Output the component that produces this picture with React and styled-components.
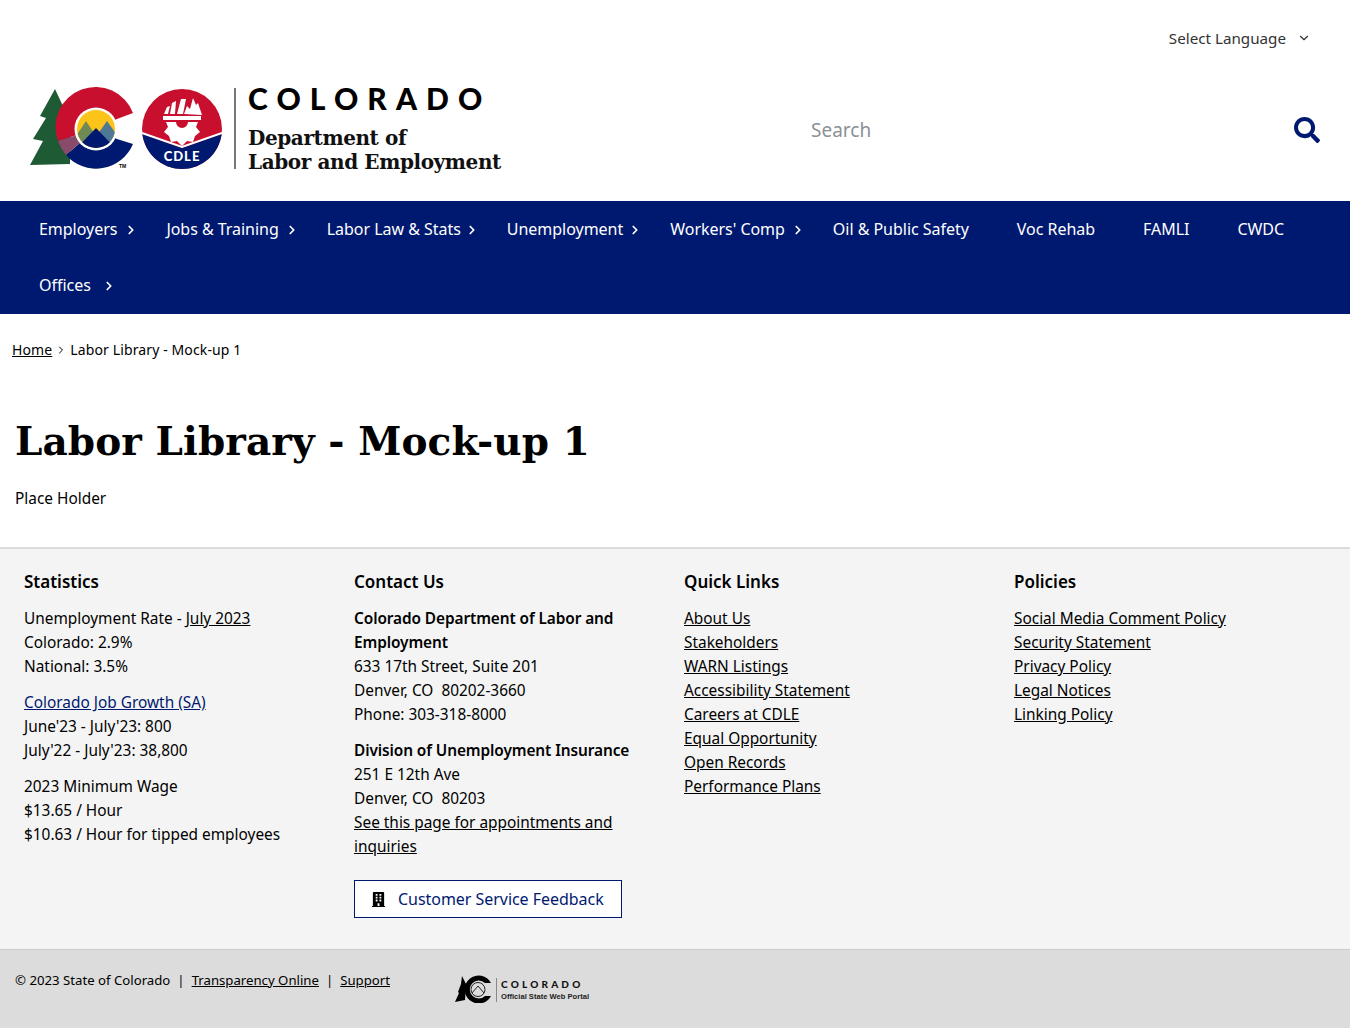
import React from 'react';
import styled, { createGlobalStyle } from 'styled-components';
import { ChevronDown, ChevronRight } from 'lucide-react';
import { FaBuilding, FaSearch } from 'react-icons/fa';

const sans = '"Noto Sans", sans-serif';
const serif = '"DejaVu Serif", serif';
const navy = '#001970';

const Global = createGlobalStyle`
  html, body { margin: 0; padding: 0; background: #fff; }
  body { font-family: ${sans}; font-size: 15.4px; color: #000; }
  * { box-sizing: border-box; }
`;
const Page = styled.div`width: 1350px; height: 1028px; overflow: hidden; display: flex; flex-direction: column;`;
const Masthead = styled.header`height: 201px; display: flex; flex-direction: column;`;
const LangRow = styled.div`height: 77px; padding: 26px 39px 0 0; display: flex; justify-content: flex-end; align-items: flex-start;`;
const LangSelect = styled.div`display: flex; align-items: center; gap: 11px; height: 24px; font-size: 15.2px; color: #333;`;
const BrandRow = styled.div`display: flex; justify-content: space-between; padding: 7px 30px 0 30px;`;
const Brand = styled.div`display: flex; align-items: center; gap: 12px; height: 88px;`;
const Divider = styled.div`width: 2px; height: 81px; background: #777;`;
const BrandText = styled.div`display: flex; flex-direction: column; padding-top: 3px;`;
const StateName = styled.div`font: 900 30px/26px Lato, sans-serif; letter-spacing: 9.1px; color: #000;`;
const DeptName = styled.div`font: 700 20px/24px ${serif}; color: #111; margin-top: 15px; letter-spacing: -0.4px;`;
const SearchBox = styled.div`width: 509px; height: 44px; margin-top: 24px; display: flex; align-items: center; justify-content: space-between; color: ${navy};`;
const SearchHint = styled.span`font-size: 19px; color: #8b9095;`;
const Nav = styled.nav`background: ${navy}; height: 113px; padding: 0 15px; display: flex; flex-wrap: wrap; align-content: flex-start;`;
const NavItem = styled.a`display: flex; align-items: center; height: 56px; padding: 0 24px; color: #fff; font-size: 16px; letter-spacing: -0.03px;`;
const NavChevron = styled(ChevronRight)`margin: 1px -20px 0 ${p => p.$gap}px;`;
const Crumbs = styled.div`height: 73px; padding: 25px 12px 0; display: flex; align-items: flex-start; gap: 3px; font-size: 14px; line-height: 22px; letter-spacing: 0.12px;`;
const CrumbChevron = styled(ChevronRight)`margin-top: 5px;`;
const Link = styled.a`color: ${p => p.$color || '#000'}; text-decoration: underline; cursor: pointer;`;
const Main = styled.main`height: 160px; padding: 0 15px; display: flex; flex-direction: column;`;
const Title = styled.h1`margin: 26px 0 0; font: 700 39px/56px ${serif}; letter-spacing: 0.08px; color: #000;`;
const Para = styled.p`margin: 18px 0 0; font-size: 15.4px; line-height: 24px;`;
const Footer = styled.footer`height: 402px; background: #f4f4f4; border-top: 2px solid #dcdcdc; display: grid; grid-template-columns: repeat(4, 330px); padding: 21px 0 0 24px;`;
const Column = styled.section`display: flex; flex-direction: column; gap: 12px; padding-right: 40px;`;
const ColTitle = styled.h2`margin: 0 0 1px; font-size: 17px; line-height: 24px; font-weight: 600;`;
const Block = styled.div`font-size: 15.4px; line-height: 24px; display: flex; flex-direction: column; align-items: flex-start;`;
const Strong = styled.strong`font-weight: 600; letter-spacing: -0.09px;`;
const Feedback = styled.a`margin-top: 9px; width: 268px; height: 38px; display: flex; align-items: center; gap: 12px; padding-left: 16px; background: #fff; border: 1px solid ${navy}; color: ${navy}; font-size: 16px; letter-spacing: -0.04px;`;
const BuildingIcon = styled(FaBuilding)`color: #000; font-size: 15px;`;
const Legal = styled.div`flex: 1; background: #dcdcdc; border-top: 1px solid #ccc; display: flex; align-items: flex-start; padding: 19px 0 0 15px; font-size: 13.2px; line-height: 22px;`;
const LegalText = styled.div`display: flex; gap: 7px; width: 440px;`;
const Portal = styled.div`display: flex; align-items: center; gap: 3px; margin-top: 6px;`;
const PortalText = styled.div`display: flex; flex-direction: column; border-left: 1px solid #888; padding-left: 4px; margin-top: 2px;`;
const PortalState = styled.div`font: 900 10px/13px Lato, sans-serif; letter-spacing: 3.2px; color: #111;`;
const PortalSub = styled.div`font: 700 7.6px/11px "Liberation Sans", sans-serif; color: #222;`;

const LogoMark = () => (
  <svg width="192" height="85" viewBox="30 85 192 85">
    <defs>
      <clipPath id="sun"><circle cx="96" cy="128" r="19" /></clipPath>
    </defs>
    <path d="M55 88 L62 103 L70 112 L70 163 L30 164 L43 140 L33 138 L46 117 L40 115 Z" fill="#1e5a34" />
    <path d="M133 112 A40 40 0 0 0 58 140 L96 128 L117 118 Z" fill="#c8102e" />
    <path d="M66 154 A40 40 0 0 0 133 143 L117 138 L96 128 Z" fill="#001970" />
    <path d="M58 140 A40 40 0 0 0 66 154 L96 128 Z" fill="#8a4a6a" />
    <circle cx="96" cy="128" r="21.5" fill="#fff" />
    <circle cx="96" cy="128" r="19" fill="#fcc419" />
    <g clipPath="url(#sun)">
      <path d="M70 144 L86 120 L102 144 Z" fill="#6f8a55" />
      <path d="M90 144 L107 120 L124 144 Z" fill="#4f7896" />
      <path d="M70 154 L96 127 L122 154 Z" fill="#001970" />
    </g>
    <text x="119" y="167" fontSize="5" fontWeight="700" fontFamily="Liberation Sans">TM</text>
    <circle cx="182" cy="128" r="40" fill="#c8102e" />
    <path d="M142.3 133 L182 147 L221.7 133 A40 40 0 0 1 142.3 133 Z" fill="#001970" />
    <path d="M142 132 L182 146 L222 132" fill="none" stroke="#fff" strokeWidth="2" />
    <path d="M164 113 L167 106 L170 105 L168 113 Z M170 113 L172 102 L176 100 L175 113 Z M177 113 L181 98 L186 98 L183 113 Z M184 113 L187 105 L190 108 L193 97 L196 104 L198 102 L202 114 Z" fill="#fff" />
    <path d="M163 115 L201 115 L201 119 L163 119 Z" fill="#fff" />
    <path d="M166 121 L176 121 A6 6 0 0 0 188 121 L198 121 L196 126 L200 131 L195 135 L193 141 L187 140 L182 145 L177 140 L171 141 L169 135 L164 131 L168 126 Z" fill="#fff" />
    <text x="182" y="160" textAnchor="middle" fontSize="13" fontWeight="900" letterSpacing="1" fill="#fff" fontFamily="Lato">CDLE</text>
  </svg>
);

const PortalMark = () => (
  <svg width="38" height="28" viewBox="0 0 38 28">
    <path d="M7 1 L11 9 L10 25 L0 27 L4 18 L3 17 L6 9 Z" fill="#000" />
    <path d="M36 8 A14 14 0 1 0 36 21 L30 21 A9 9 0 1 1 30 8 Z" fill="#000" />
    <circle cx="23" cy="14.5" r="7" fill="none" stroke="#222" strokeWidth="1" />
    <path d="M17 18 L23 11 L29 18" fill="none" stroke="#222" strokeWidth="1" />
  </svg>
);

const nav = [
  ['Employers', 7], ['Jobs & Training', 6], ['Labor Law & Stats', 4], ['Unemployment', 5],
  ['Workers\' Comp', 6], ['Oil & Public Safety', 0], ['Voc Rehab', 0], ['FAMLI', 0], ['CWDC', 0], ['Offices', 11],
];

export default function App() {
  return (
    <Page>
      <Global />
      <Masthead>
        <LangRow><LangSelect>Select Language <ChevronDown size={14} /></LangSelect></LangRow>
        <BrandRow>
          <Brand>
            <LogoMark />
            <Divider />
            <BrandText>
              <StateName>COLORADO</StateName>
              <DeptName>Department of<br />Labor and Employment</DeptName>
            </BrandText>
          </Brand>
          <SearchBox><SearchHint>Search</SearchHint><FaSearch size={26} /></SearchBox>
        </BrandRow>
      </Masthead>
      <Nav>
        {nav.map(([t, g]) => <NavItem key={t}>{t}{g > 0 && <NavChevron $gap={g} size={14} strokeWidth={3} />}</NavItem>)}
      </Nav>
      <Crumbs><Link>Home</Link> <CrumbChevron size={12} /> <span>Labor Library - Mock-up 1</span></Crumbs>
      <Main>
        <Title>Labor Library - Mock-up 1</Title>
        <Para>Place Holder</Para>
      </Main>
      <Footer>
        <Column>
          <ColTitle>Statistics</ColTitle>
          <Block><span>Unemployment Rate - <Link>July 2023</Link></span><span>Colorado: 2.9%</span><span>National: 3.5%</span></Block>
          <Block><Link $color={navy}>Colorado Job Growth (SA)</Link><span>June'23 - July'23: 800</span><span>July'22 - July'23: 38,800</span></Block>
          <Block><span>2023 Minimum Wage</span><span>$13.65 / Hour</span><span>$10.63 / Hour for tipped employees</span></Block>
        </Column>
        <Column>
          <ColTitle>Contact Us</ColTitle>
          <Block><Strong>Colorado Department of Labor and Employment</Strong><span>633 17th Street, Suite 201</span><span>Denver, CO&nbsp; 80202-3660</span><span>Phone: 303-318-8000</span></Block>
          <Block><Strong>Division of Unemployment Insurance</Strong><span>251 E 12th Ave</span><span>Denver, CO&nbsp; 80203</span><Link>See this page for appointments and inquiries</Link></Block>
          <Feedback><BuildingIcon />Customer Service Feedback</Feedback>
        </Column>
        <Column>
          <ColTitle>Quick Links</ColTitle>
          <Block>{['About Us','Stakeholders','WARN Listings','Accessibility Statement','Careers at CDLE','Equal Opportunity','Open Records','Performance Plans'].map(t => <Link key={t}>{t}</Link>)}</Block>
        </Column>
        <Column>
          <ColTitle>Policies</ColTitle>
          <Block>{['Social Media Comment Policy','Security Statement','Privacy Policy','Legal Notices','Linking Policy'].map(t => <Link key={t}>{t}</Link>)}</Block>
        </Column>
      </Footer>
      <Legal>
        <LegalText><span>© 2023 State of Colorado</span><span>|</span><Link>Transparency Online</Link><span>|</span><Link>Support</Link></LegalText>
        <Portal>
          <PortalMark />
          <PortalText><PortalState>COLORADO</PortalState><PortalSub>Official State Web Portal</PortalSub></PortalText>
        </Portal>
      </Legal>
    </Page>
  );
}
